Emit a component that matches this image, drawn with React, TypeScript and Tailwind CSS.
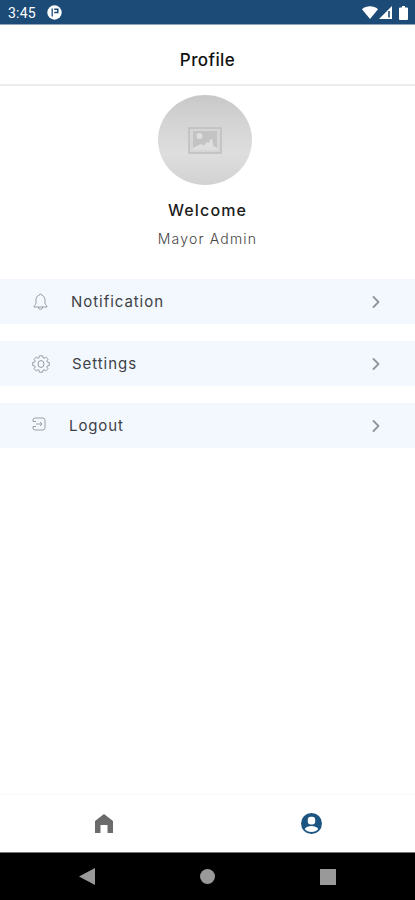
import type { ReactNode } from 'react';
import { ChevronRight } from 'lucide-react';

function StatusBar() {
  return (
    <div className="flex h-[25px] shrink-0 items-center border-b border-[#8fa6bb] bg-[#1d4b77] pl-2 pr-[7px] pt-px text-white">
      <span className="font-[Roboto] text-[14px] leading-none tracking-[0.2px]">3:45</span>
      <svg className="ml-[11px] h-[15px] w-[15px]" viewBox="0 0 15 15">
        <circle cx="7.5" cy="7.5" r="7.2" fill="#fff" />
        <path d="M5.2 3.5v8" stroke="#1d4b77" strokeWidth="1.3" />
        <path d="M7.2 4.200h3.600v3.200H7.200" fill="none" stroke="#1d4b77" strokeWidth="1.5" />
      </svg>
      <div className="ml-auto flex items-center">
        <svg className="h-[13px] w-4" viewBox="0 0 16 13">
          <path d="M0 3.2C4.6-.6 11.4-.6 16 3.2L8 13Z" fill="#fff" />
        </svg>
        <svg className="ml-px h-[13px] w-[13px]" viewBox="0 0 13 13">
          <path d="M0 13 13 0v13Z" fill="#fff" />
          <path d="M10 5v6.500" stroke="#1d4b77" strokeWidth="1.6" />
        </svg>
        <svg className="ml-[7px] h-[14px] w-[9px]" viewBox="0 0 9 14">
          <path d="M3 0h3v1.5h2q1 0 1 1V13q0 1-1 1H1q-1 0-1-1V2.5q0-1 1-1h2Z" fill="#fff" />
        </svg>
      </div>
    </div>
  );
}

function BellIcon() {
  return (
    <svg className="h-[18px] w-[15px]" viewBox="0 0 15 18" fill="none" stroke="#8d9299" strokeWidth="0.9">
      <path d="M6.3 2.2a1.2 1.2 0 0 1 2.4 0C10.9 2.8 12 4.6 12 7v3.2c0 1.5 2 2 2 3.8H1c0-1.8 2-2.3 2-3.8V7c0-2.4 1.1-4.2 3.3-4.8Z" />
      <path d="M5.4 14.2a2.1 2.1 0 0 0 4.2 0" />
    </svg>
  );
}

function GearIcon() {
  return (
    <svg className="h-[18px] w-[18px]" viewBox="0 0 18 18" fill="none" stroke="#8d9299" strokeWidth="0.9" strokeLinejoin="round">
      <path d="M7.4.8h3.2l.4 2 1.1.5 1.7-1.2 2.2 2.2-1.2 1.7.5 1.1 2 .4v3l-2 .4-.5 1.1 1.2 1.7-2.2 2.2-1.7-1.2-1.1.5-.4 2H7.4l-.4-2-1.1-.5-1.7 1.2L2 13.7 3.2 12l-.5-1.1-2-.4v-3l2-.4L3.200 6 2 4.300l2.200-2.200 1.700 1.200L7 2.800Z" />
      <ellipse cx="9" cy="9" rx="3" ry="3.5" />
    </svg>
  );
}

function LogoutIcon() {
  return (
    <svg className="h-[14px] w-[14px]" viewBox="0 0 14 14" fill="none" stroke="#92969c" strokeWidth="0.9">
      <path d="M1 4.500V3a2 2 0 0 1 2-2h8a2 2 0 0 1 2 2v8a2 2 0 0 1-2 2H3a2 2 0 0 1-2-2V9.500" />
      <path d="M4 7h6M8 5l2 2-2 2M1 4.500h3M1 9.500h3" />
    </svg>
  );
}

function MenuRow({ icon, children }: { icon: ReactNode; children: ReactNode }) {
  return (
    <div className="flex h-[45px] items-center bg-[#f2f8fe] pr-[29px]">
      {icon}
      {children}
      <ChevronRight className="ml-auto h-5 w-5 text-[#929599]" strokeWidth={2.2} />
    </div>
  );
}

export default function App() {
  return (
    <div className="flex h-[900px] w-[415px] flex-col overflow-hidden bg-white font-[Inter,sans-serif]">
      <StatusBar />

      <header className="flex h-[61px] shrink-0 items-center justify-center border-b-2 border-[#ececec] pt-2.5">
        <h1 className="text-[17px] font-medium leading-6 tracking-[0.4px] text-[#111]">Profile</h1>
      </header>

      <main className="flex flex-1 flex-col">
        <section className="flex flex-col items-center pt-[9px]">
          <div className="mr-[5px] flex h-[90px] w-[94px] items-center justify-center rounded-[50%] bg-[linear-gradient(#c8c8c8,#d2d2d2_25%,#dedede_65%,#d2d2d2)]">
            <svg className="h-[27px] w-[34px]" viewBox="0 0 34 27">
              <path d="M1 1h32v25H1Z" fill="#d6d6d6" stroke="#bfbfbf" strokeWidth="1.5" />
              <path d="M5 4h24v19H5Z" fill="#c3c3c3" />
              <circle cx="11.5" cy="9" r="3" fill="#dedede" />
              <path d="M5 23v-2l8-4 3 1.500 3-3.500 2 1 1.500-4 1.500 0 1.500 7 3.500 2v2Z" fill="#dedede" />
            </svg>
          </div>
          <p className="mt-[13px] text-base font-medium leading-6 tracking-[1.15px] text-[#1c1c1c]">Welcome</p>
          <p className="mt-[5px] text-sm font-light leading-6 tracking-[1.2px] text-[#444]">Mayor Admin</p>
        </section>

        <nav className="mt-7 flex flex-col gap-[17px] text-[15px] leading-6 text-[#3e4146]">
          <MenuRow icon={<span className="ml-[33px]"><BellIcon /></span>}>
            <span className="ml-[23px] tracking-[0.95px]">Notification</span>
          </MenuRow>
          <MenuRow icon={<span className="ml-8"><GearIcon /></span>}>
            <span className="ml-[22px] tracking-[0.95px]">Settings</span>
          </MenuRow>
          <MenuRow icon={<span className="mb-[3px] ml-8"><LogoutIcon /></span>}>
            <span className="ml-[23px] tracking-[0.9px]">Logout</span>
          </MenuRow>
        </nav>
      </main>

      <footer className="grid h-[58px] shrink-0 grid-cols-2 items-center justify-items-center border-t border-[#fafafa]">
        <svg className="h-[19px] w-[18px]" viewBox="0 0 18 19">
          <path d="M9 0 18 7v12h-5.500v-8h-7v8H0V7Z" fill="#6b6b6b" />
        </svg>
        <svg className="h-[21px] w-[21px]" viewBox="0 0 21 21">
          <circle cx="10.5" cy="10.5" r="10.5" fill="#1d5582" />
          <rect x="6.8" y="3.8" width="7.4" height="7.6" rx="3" fill="#fff" />
          <path d="M3.700 16c1.500-2.300 4-3 6.800-3s5.300.7 6.800 3c-1.500 2-4 3-6.800 3s-5.300-1-6.800-3Z" fill="#fff" />
        </svg>
      </footer>

      <div className="flex h-12 shrink-0 items-center justify-between border-t border-[#777] bg-black px-[79px]">
        <svg className="h-[17px] w-4" viewBox="0 0 16 17">
          <path d="M0 8.500 16 0v17Z" fill="#999" />
        </svg>
        <span className="h-[15px] w-[15px] rounded-full bg-[#999]" />
        <span className="h-4 w-4 bg-[#999]" />
      </div>
    </div>
  );
}
